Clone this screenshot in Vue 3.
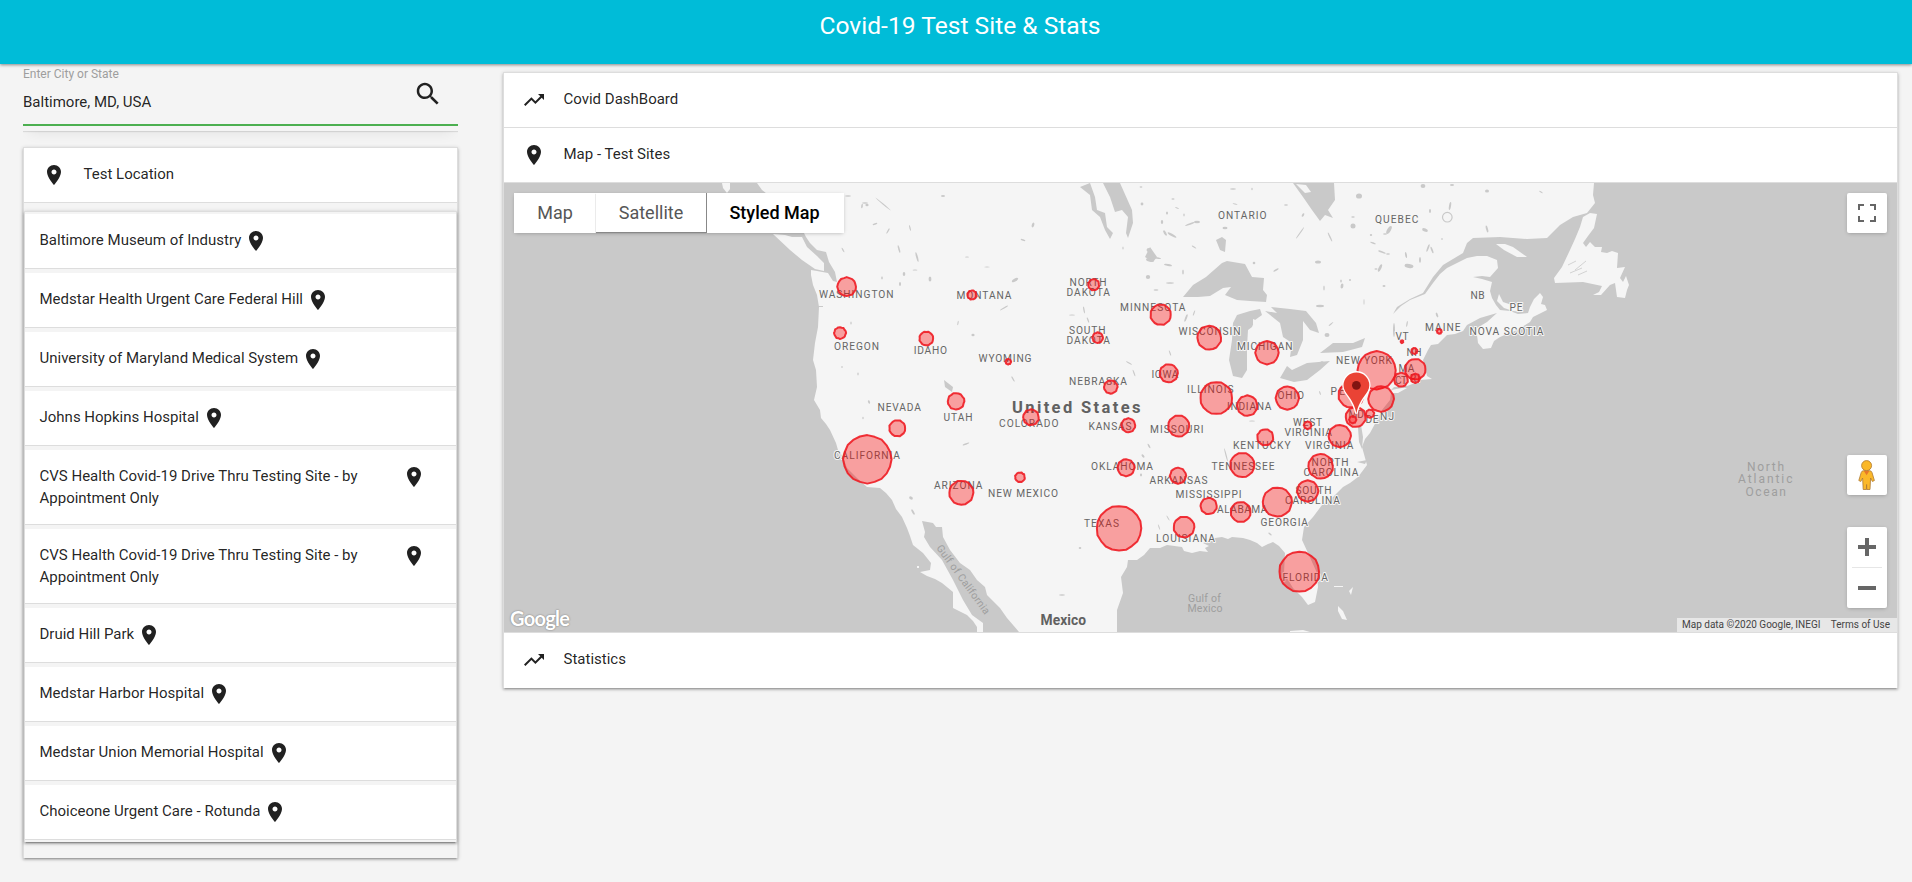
<script setup>
const sites = [
  'Baltimore Museum of Industry',
  'Medstar Health Urgent Care Federal Hill',
  'University of Maryland Medical System',
  'Johns Hopkins Hospital',
  'CVS Health Covid-19 Drive Thru Testing Site - by Appointment Only',
  'CVS Health Covid-19 Drive Thru Testing Site - by Appointment Only',
  'Druid Hill Park',
  'Medstar Harbor Hospital',
  'Medstar Union Memorial Hospital',
  'Choiceone Urgent Care - Rotunda',
]

const pin = 'M12 2C8.13 2 5 5.13 5 9c0 5.25 7 13 7 13s7-7.75 7-13c0-3.87-3.13-7-7-7zm0 9.5c-1.38 0-2.5-1.12-2.5-2.5s1.12-2.5 2.5-2.5 2.5 1.12 2.5 2.5-1.12 2.5-2.5 2.5z'
const trend = 'M16 6l2.29 2.29-4.88 4.88-4-4L2 16.59 3.41 18l6-6 4 4 6.3-6.29L22 12V6z'

// text, start x, end x, baseline
const labels = [
  ['WASHINGTON', 819, 893.5, 297.7], ['OREGON', 834, 879, 349.7], ['IDAHO', 913.7, 947, 353.7],
  ['MONTANA', 956.5, 1011.5, 298.5], ['WYOMING', 978.5, 1031.5, 361.5],
  ['NORTH', 1069.5, 1106.5, 285.7], ['DAKOTA', 1066.5, 1110, 295.7],
  ['SOUTH', 1069, 1105.5, 333.8], ['DAKOTA', 1066.5, 1110, 343.8],
  ['NEBRASKA', 1069, 1127, 384.8], ['NEVADA', 877.5, 921, 410.8], ['UTAH', 943.5, 972.5, 420.8],
  ['COLORADO', 999, 1058.5, 426.8], ['KANSAS', 1088.5, 1131.5, 429.7], ['OKLAHOMA', 1091, 1153, 470],
  ['CALIFORNIA', 834, 900, 458.8], ['ARIZONA', 934, 982.5, 489], ['NEW MEXICO', 988, 1058, 496.8],
  ['TEXAS', 1084, 1119, 527], ['MINNESOTA', 1120, 1185.5, 310.8], ['WISCONSIN', 1178.5, 1240.5, 335],
  ['MICHIGAN', 1237, 1292.5, 349.7], ['ONTARIO', 1218, 1266.5, 218.8], ['IOWA', 1151.5, 1178.5, 377.7],
  ['ILLINOIS', 1187, 1233.5, 393], ['INDIANA', 1227, 1271.5, 409.7], ['OHIO', 1277.5, 1304, 398.8],
  ['MISSOURI', 1150, 1203.5, 432.8], ['KENTUCKY', 1233, 1290.5, 448.8], ['WEST', 1293, 1322, 425.7],
  ['VIRGINIA', 1284.5, 1332, 435.8], ['VIRGINIA', 1305, 1353.5, 448.8], ['TENNESSEE', 1211.5, 1274.5, 470],
  ['NORTH', 1311.5, 1348.5, 465.8], ['CAROLINA', 1303.5, 1358.5, 475.8], ['SOUTH', 1295.5, 1331.5, 493.8],
  ['CAROLINA', 1285, 1340, 503.8], ['ARKANSAS', 1149.5, 1207.5, 483.8], ['MISSISSIPPI', 1175.5, 1241.5, 497.7],
  ['ALABAMA', 1217, 1267.5, 512.8], ['GEORGIA', 1260.5, 1308, 525.8], ['LOUISIANA', 1156, 1215, 541.8],
  ['FLORIDA', 1282.5, 1328, 580.8], ['NEW YORK', 1336, 1392, 363.8], ['VT', 1395.5, 1408.5, 340],
  ['NH', 1406.5, 1421.5, 356], ['MA', 1398.5, 1414.5, 372], ['CT', 1395, 1407, 383.5], ['RI', 1410, 1420, 382],
  ['PE', 1330.5, 1345, 395], ['MD', 1348.5, 1364, 418], ['DE', 1365.5, 1378.5, 423], ['NJ', 1380, 1394, 419.5],
  ['MAINE', 1425, 1460.5, 331], ['NB', 1470.5, 1484.5, 298.8], ['PE', 1509.5, 1522.5, 311],
  ['NOVA SCOTIA', 1469.5, 1543.5, 334.7], ['QUEBEC', 1375, 1418.5, 222.8],
]
const seaLabels = [
  ['Gulf of', 1188, 1221, 601.5, 10.5], ['Mexico', 1187.5, 1222.5, 612, 10.5],
  ['North', 1747, 1784, 470.5, 12], ['Atlantic', 1738, 1792.5, 483.4, 12], ['Ocean', 1745.5, 1786, 496.2, 12],
]
const cases = [
  [846.7, 286.7, 9.3], [840, 333, 5.8], [926.3, 338.5, 6.9], [972, 295, 4.5], [1008.3, 361.7, 2.7],
  [956, 401.3, 8.2], [897.3, 428.3, 8], [1031, 417.3, 7.8], [867.3, 459.3, 24], [961.3, 492.7, 12],
  [1020, 477.3, 4.8], [1128.3, 425.3, 6.9], [1126, 467.7, 8.4], [1119, 528.3, 22.3], [1093.7, 284.7, 5.5],
  [1097.7, 337.7, 5.2], [1110.7, 387, 6.6], [1160.7, 314.7, 10.2], [1209.3, 337.7, 11.9], [1267, 352.7, 11.5],
  [1168.7, 373.3, 9], [1216.3, 398, 16], [1247.3, 405.7, 10.1], [1287.3, 398, 11.5], [1178.7, 426, 10.5],
  [1265.3, 437.3, 8], [1307.7, 425.3, 3.7], [1339.7, 436, 11], [1242.3, 465, 12.1], [1320.7, 466.3, 12.3],
  [1307.7, 491, 10.5], [1277.3, 502, 14.5], [1240.7, 512, 10], [1208.7, 506, 8.1], [1178, 475.7, 7.9],
  [1184, 527, 10.3], [1299.3, 571.7, 20], [1376.7, 370.3, 19], [1381, 399, 12.7], [1351, 395, 12.5],
  [1355.7, 417, 10], [1352.7, 419.7, 3.5], [1370, 413.7, 4], [1415.3, 369.3, 10.3], [1401, 379.7, 6.9],
  [1415.3, 378.3, 4.5], [1414.3, 351, 2.9], [1402, 341.7, 1.2], [1439.3, 331.3, 2.3],
]
// The overlay rings are many-sided shapes with slightly uneven radii.
const ring = ([cx, cy, r], i) => {
  const n = 20
  return Array.from({ length: n }, (_, k) => {
    const a = (k / n) * Math.PI * 2
    const rr = r + 0.3 * Math.sin(k * 2.6 + i * 1.7)
    return `${(cx + rr * Math.cos(a)).toFixed(1)},${(cy + rr * Math.sin(a)).toFixed(1)}`
  }).join(' ')
}

// x, y, rx, ry, rotation
const ponds = [
  [848, 196, 3, .8, 0], [865, 203, 3, .8, 0], [867, 205, 1.6, 1.2, 0], [883, 204, 10, .5, 40], [875, 224, 2.5, .8, -20],
  [862, 206, .8, 2.4, 10], [888, 231, .7, 3, 30], [899, 249, .8, 4, -15], [917, 257, .9, 5, -15], [910, 228, .6, 3, -15],
  [943, 196, 2, 1, 0], [904, 274, 1.3, 2, 0], [900, 284, 1, 2, 0], [930, 279, 1.4, 2.6, 0], [915, 270, 2.5, .5, 0],
  [882, 278, .8, 1.4, 0], [843, 250, .7, 2.5, -30], [1015, 280, 3.5, 1.5, -30], [1004, 308, 4.5, .7, -30],
  [967, 257, 2, .6, 0], [1023, 240, 2.5, .8, 20], [1033, 225, 1.2, 2.5, 20], [987, 267, 3, .4, 0], [958, 323, .6, 2.4, 10],
  [973, 335, 1.6, 1.2, 0], [1013, 379, .7, 3, -30], [869, 402, 1, 1.8, -20], [863, 418, .7, 1.2, 0], [858, 374, .7, 1.4, 0],
  [851, 323, .7, 1.5, 0], [842, 367, 1, .8, 0], [966, 444, 3.5, .7, -20], [911, 498, 2, 1.4, 30], [913, 512, 1, 3, -30],
  [1062, 595, 3, .7, 0], [1080, 548, 1.3, 1, 0], [1149, 446, .8, 2.5, -30], [1141, 475, 1, 1.4, 0],
  [1084, 310, .7, 3.5, -10], [1088, 320, .7, 3, -20], [1129, 363, 3.5, .6, 30], [1134, 373, .6, 3.5, -20], [1072, 315, 3, .6, 0],
  [1148, 277, 2.2, 2, 0], [1142, 204, 1.4, 1.4, 0], [1150, 260, 4, 1.8, 10], [1157, 258, 4, .8, 10], [1149, 250, 2.5, 2, 0],
  [1165, 233, 3, 1.2, 60], [1172, 235, 5, 1.2, 30], [1190, 224, 5, .9, -20], [1197, 222, 3, 1.2, 0], [1162, 222, 1.2, 2, 0],
  [1168, 265, 4, 1, 10], [1194, 247, 2.6, .7, 30], [1156, 290, 2.5, .8, 0], [1170, 283, 4, .8, 0], [1183, 272, .8, 2.5, 0],
  [1225, 228, 2.5, 1.2, 0], [1233, 189, 3, .7, 0], [1254, 263, 1.3, 1.3, 0], [1276, 270, 3, .8, -30], [1318, 262, 3, 1.6, 0],
  [1324, 288, .7, 2.5, 0], [1342, 286, 1.4, 2.6, 10], [1320, 306, 4, 1.2, 0], [1327, 335, 2.5, 2, 0], [1331, 324, 3, .6, -40],
  [1300, 233, .6, 7, 35], [1330, 237, .7, 5, -25], [1353, 226, 2.5, 2.5, 0], [1359, 196, 3, 2.6, 0], [1423, 186, 2.4, 2, 0],
  [1353, 217, 1.8, .8, 0], [1389, 230, 1.8, 4.5, 30], [1385, 234, 2, .8, 0], [1425, 230, 3, 1.6, 20], [1450, 206, 1, 4, 10],
  [1487, 191, 2, 1.6, 0], [1452, 185, 2, .9, 0], [1487, 229, 1, 3.5, -15], [1541, 192, 2, .6, 30], [1409, 266, 4.5, 2, 10],
  [1380, 268, 1.4, 4, 25], [1376, 269, 1.6, .8, 0], [1406, 255, .9, 3, -10], [1420, 260, 1, 3, 0], [1428, 248, .9, 4, 20],
  [1432, 250, .9, 3.5, -20], [1382, 252, 4, .8, 20], [1373, 243, 3, .7, 20], [1388, 254, 2, .7, 0],
  [1384, 286, 1.5, .9, 0], [1364, 302, .5, 3, 0],
  [1437, 315, 1, 2.5, -20], [1407, 324, .7, 3, 10], [1350, 280, 1, 1, 0], [1341, 281, .8, 1.6, 0], [1394, 330, 1, 7, 0],
  [1371, 235, 1.2, 1, 0], [1430, 211, 1, 2, 0], [1442, 239, 1, .7, 0], [1322, 362, 1.5, .7, 0],
  [1252, 421, 3, .6, 0], [1226, 455, .6, 7, -15], [1270, 534, 2, .8, 40], [1168, 518, .5, 3, -30], [1159, 527, .5, 3, -20],
  [1320, 393, .6, 2, -20], [1143, 456, 1, 2, -40], [1170, 353, .6, 3, -20], [1186, 318, 1, 4, 20], [1194, 313, .6, 3, 20],
  [1123, 248, .6, 1.6, 0], [1141, 187, 1.4, .7, 0], [1173, 199, 1.6, .7, 0], [1235, 204, 2.5, .6, 10], [1252, 189, .7, 1.2, 0],
  [1286, 205, 2, .7, 0], [1303, 215, 1, 2, 30], [1167, 213, 1, 1.6, 0], [1177, 208, 2, .6, 20], [1184, 215, .7, 1.4, 0],
]
const pondTransform = ([x, y, , , a]) => `translate(${x} ${y}) rotate(${a})`
</script>

<template>
  <div class="page">
    <header class="bar"><h1>Covid-19 Test Site &amp; Stats</h1></header>

    <main class="columns">
      <aside class="side">
        <div class="search">
          <div class="field">
            <span class="caption">Enter City or State</span>
            <span class="value">Baltimore, MD, USA</span>
          </div>
          <svg class="lens" viewBox="0 0 24 24"><path d="M15.5 14h-.79l-.28-.27C15.41 12.59 16 11.11 16 9.5 16 5.91 13.09 3 9.5 3S3 5.91 3 9.5 5.91 16 9.5 16c1.61 0 3.09-.59 4.23-1.57l.27.28v.79l5 4.99L20.49 19l-4.99-5zm-6 0C7.01 14 5 11.99 5 9.5S7.01 5 9.5 5 14 7.01 14 9.5 11.99 14 9.5 14z" /></svg>
        </div>

        <section class="panel locations">
          <div class="row">
            <svg class="icon" viewBox="0 0 24 24"><path :d="pin" /></svg>
            <span>Test Location</span>
          </div>
          <ul class="list">
            <li v-for="(s, i) in sites" :key="i">
              <span class="site">{{ s }}</span>
              <svg class="icon" viewBox="0 0 24 24"><path :d="pin" /></svg>
            </li>
          </ul>
        </section>
      </aside>

      <section class="panel content">
        <div class="row">
          <svg class="icon" viewBox="0 0 24 24"><path :d="trend" /></svg>
          <span>Covid DashBoard</span>
        </div>
        <div class="row">
          <svg class="icon" viewBox="0 0 24 24"><path :d="pin" /></svg>
          <span>Map - Test Sites</span>
        </div>

        <div class="map">
          <svg class="canvas" viewBox="504 183 1393 449" preserveAspectRatio="none">
            <rect x="504" y="183" width="1393" height="449" class="land" />
            <g class="water">
              <path d="M504 183H757L762 190 775 200 800 225 806 237 810 243 817 250 826 252 829 262 835 272 837 282 833 281 828 273 817 271 811 270 811 275 813 285 817 295 819 307 818 327 815 343 813 360 816 370 817 387 814 400 820 410 821 418 826 424 830 430 836 443 838 450 843 457 847 468 857 478 867 487 880 488 886 493 892 500 896 509 902 517 907 528 910 536 913 545 923 553 931 563 930 570 920 572 927 576 935 579 942 583 953 592 953 608 967 615 973 621 977 627V632H504Z" />
              <path d="M922 521L933 523 936 527 942 527 943 537 950 550 960 563 970 570 977 580 985 587 987 595 1000 608 1007 618 1019 632H983V623L972 615 963 600 953 580 942 560 930 547 924 537 925 532Z" />
              <path d="M1117 632V610L1123 593 1121 577 1127 567 1128 560 1137 560 1144 555 1150 548 1160 548 1167 545 1182 547 1184 551 1192 553 1200 551 1208 552 1205 548 1209 546 1203 543 1209 541 1215 538 1222 537 1228 539 1232 537 1243 538 1250 540 1257 543 1262 547 1268 544 1273 542 1279 546 1285 553 1284 573 1293 588 1302 597 1308 605 1315 602 1318 587 1317 573 1308 553 1302 540 1304 527 1313 517 1322 505 1333 497 1343 487 1350 483 1358 477 1367 465 1362 447 1365 439 1370 433 1377 420 1382 410 1390 400 1391 393 1398 393 1407 388 1402 388 1391 390 1394 387 1407 386 1415 383 1420 380 1432 379 1427 376 1425 367 1423 360 1428 350 1431 345 1438 344 1447 335 1455 334 1463 331 1467 325 1480 318 1497 313 1487 322 1477 328 1477 335 1478 343 1483 349 1491 348 1494 341 1500 337 1517 330 1530 322 1533 317 1547 310 1545 305 1541 304 1543 297 1540 293 1534 299 1530 307 1528 313 1518 314 1510 311 1500 310 1496 305 1492 298 1490 291 1492 282 1482 279 1473 277 1482 276 1490 277 1498 268 1497 260 1487 256 1477 256 1467 258 1455 264 1447 268 1440 274 1433 283 1425 294 1410 300 1401 306 1393 314 1397 307 1410 299 1423 293 1433 277 1443 265 1463 253 1467 243 1473 238 1500 237 1527 239 1547 238 1560 225 1573 217 1587 213 1595 203 1593 195 1594 183H1897V632Z" />
              <path d="M1183 297L1193 285 1206 277 1214 270 1222 263 1227 261 1245 264 1252 277 1264 278 1263 290 1267 295 1266 302 1250 301 1237 300 1225 295 1231 287 1223 288 1210 296 1198 297Z" />
              <path d="M1237 315L1250 311 1260 309 1262 315 1255 320 1252 327 1248 330 1247 347 1247 370 1242 378 1233 376 1229 360 1232 340 1233 323Z" />
              <path d="M1265 311L1277 313 1271 307 1290 309 1306 311 1316 323 1319 333 1310 330 1303 321 1303 340 1297 355 1290 357 1292 343 1283 337 1280 323Z" />
              <path d="M1280 378L1287 366 1292 370 1307 363 1330 361 1320 370 1307 380 1294 382Z" />
              <path d="M1320 353L1333 343 1353 343 1365 338 1362 347 1343 352Z" />
              <path d="M1293 183H1334L1335 200 1328 210 1333 218 1325 215 1320 221 1312 210 1303 197Z" />
              <path d="M1103 183H1120L1132 210 1133 223 1128 238 1126 233 1128 217 1122 210 1115 212 1110 197Z" />
              <path d="M1080 187L1090 183 1095 197 1097 210 1105 213 1107 227 1113 233 1110 239 1105 230 1100 217 1092 210 1090 195Z" />
              <path d="M1216 240L1222 237 1226 240 1225 252 1220 250Z" />
              <path d="M1145 257L1150 247 1157 257 1153 262Z" />
              <path d="M944 380L953 387 952 392 945 387Z" />
              <path d="M1363 437L1362 449 1359 442 1358 427 1361 425Z" />
              <path d="M1357 462L1367 460 1365 464Z" />
              <path d="M816 306H823V307H816Z" />
            </g>
            <g class="water">
              <ellipse v-for="(p, i) in ponds" :key="i" :rx="p[2]" :ry="p[3]" :transform="pondTransform(p)" />
            </g>
            <circle cx="1447.3" cy="217.2" r="4.8" class="crater" />
            <g class="land">
              <path d="M722 183H730V189L727 193 723 188Z" />
              <path d="M773 234L785 235 792 237 802 237 807 247 817 256 824 263 824 271 815 269 802 260 790 250Z" />
              <path d="M1597 214L1590 213 1583 217 1580 227 1575 239 1570 250 1562 267 1554 278 1555 283 1583 282 1602 286 1599 292 1593 295 1601 295 1610 285 1615 283 1616 290 1617 297 1625 298 1627 290 1629 285 1626 276 1623 282 1620 278 1625 267 1617 268 1618 253 1612 251 1607 253 1601 252 1602 247 1595 247 1590 242 1586 247 1583 243 1588 236 1594 228Z" />
              <path d="M1496 244L1505 244 1513 247 1527 257 1517 257 1504 250Z" />
              <path d="M1499 294L1503 302 1512 305 1522 305 1523 312 1513 311 1504 308 1497 301Z" />
              <path d="M1296 184L1306 185 1311 192 1305 193Z" />
              <path d="M1338 606L1343 611 1347 620 1342 619 1338 611ZM1349 591L1353 587 1351 595ZM1334 586H1343V587H1334ZM1290 631L1303 630 1310 632H1290Z" />
              <path d="M917 566H919V568H917ZM1253 319L1258 321 1253 325Z" />
            </g>
            <g class="ridge">
              <path d="M1568 265L1576 261M1570 273L1582 268M1575 270L1586 261M1578 275L1587 271" />
            </g>

            <text v-for="(l, i) in labels" :key="i" class="state" :x="l[1]" :y="l[3]" :textLength="l[2] - l[1]">{{ l[0] }}</text>
            <text v-for="(l, i) in seaLabels" :key="'s' + i" class="sea" :x="l[1]" :y="l[3]" :textLength="l[2] - l[1]" :font-size="l[4]">{{ l[0] }}</text>
            <text class="sea" font-size="10.5" textLength="83" transform="translate(936 548) rotate(54)">Gulf of California</text>
            <text class="country" x="1012" y="412.8" textLength="128.5" font-size="16.5">United States</text>
            <text class="country" x="1040.5" y="625.2" textLength="45.5" font-size="13.8">Mexico</text>

            <polygon v-for="(c, i) in cases" :key="'c' + i" class="case" :points="ring(c, i)" />

            <g transform="translate(1356.4 413.5)">
              <path class="pin-halo" d="M0 0C-1.6-8-4.4-12.4-7.8-17.2-10.6-21-12.9-23.8-12.9-28.2A12.9 12.9 0 0 1 12.9-28.2C12.9-23.8 10.6-21 7.8-17.2 4.4-12.4 1.6-8 0 0Z" />
              <circle class="pin-dot" cx="0" cy="-28.2" r="4.4" />
            </g>
          </svg>

          <div class="types">
            <span class="type">Map</span><span class="type mid">Satellite</span><span class="type on">Styled Map</span>
          </div>
          <svg class="ctl full" viewBox="0 0 40 40"><path d="M11 11h6v2h-4v4h-2zM23 11h6v6h-2v-4h-4zM11 23h2v4h4v2h-6zM27 23h2v6h-6v-2h4z" /></svg>
          <svg class="ctl man" viewBox="0 0 40 40">
            <path d="M14.2 17.5q.6-1.8 2.4-1.8h6q1.8 0 2.4 1.8l2.4 8-2 1-1.8-3.5-.6 11.5h-3.2l-.2-5-.2 5h-3.2l-.6-11.5-1.8 3.5-2-1z" class="body" />
            <path d="M16.7 15.7h5.8l-2.9 4.6z" class="collar" />
            <circle cx="19.6" cy="10.6" r="5" class="body" />
          </svg>
          <svg class="ctl zoom" viewBox="0 0 40 81"><path d="M11 18h7v-7h4v7h7v4h-7v7h-4v-7h-7zM11 59h18v4H11z" /><path d="M5 40h30v1H5z" class="rule" /></svg>
          <span class="google">Google</span>
          <div class="legal"><span>Map data ©2020 Google, INEGI</span><span>Terms of Use</span></div>
        </div>

        <div class="row">
          <svg class="icon" viewBox="0 0 24 24"><path :d="trend" /></svg>
          <span>Statistics</span>
        </div>
      </section>
    </main>
  </div>
</template>

<style>
body { background: #f4f4f4; overflow: hidden; }
</style>

<style scoped>
* { box-sizing: border-box; }
.page { height: 882px; background: #f4f4f4; font-family: Roboto, sans-serif; font-size: 15px; line-height: 22px; color: rgba(0, 0, 0, .87); overflow: hidden; }
.bar { position: relative; z-index: 2; height: 64px; padding-left: 8px; background: #00bcd8; display: flex; justify-content: center; box-shadow: 0 1px 3px rgba(0, 0, 0, .45); }
h1 { margin: 10px 0 0; color: #fff; font-size: 24.6px; line-height: 32px; font-weight: 400; }
.columns { display: flex; align-items: flex-start; padding-left: 23px; }
.side { width: 435px; margin-right: 45px; }
.search { height: 67px; display: flex; justify-content: space-between; box-shadow: 0 1px 1px rgba(0, 0, 0, .1), 0 8px 12px -6px rgba(0, 0, 0, .07); position: relative; clip-path: inset(0 0 -20px 0); }
.field { display: flex; flex-direction: column; width: 100%; height: 62px; border-bottom: 2px solid #4caf50; }
.caption { font-size: 12px; line-height: 16px; color: #9e9e9e; margin-top: 2px; }
.value { line-height: 20px; margin-top: 10px; }
.lens { position: absolute; left: 390px; top: 15px; width: 30px; height: 30px; fill: #212121; }
.panel { border: 1px solid #ddd; border-bottom: 0; box-shadow: 0 2px 2px rgba(0, 0, 0, .14), 0 3px 1px -2px rgba(0, 0, 0, .12), 0 1px 4px rgba(0, 0, 0, .2); }
.locations { margin-top: 16px; padding-bottom: 16px; }
.row { height: 55px; padding: 15px 17px 15px 17.5px; display: flex; align-items: flex-start; background: #fff; border-bottom: 1px solid #ddd; }
.row span { margin-left: 18px; }
.icon { width: 24px; height: 24px; flex: none; fill: #212121; }
.list { list-style: none; margin: 8px 0 0; padding: 2px 0; border: 1px solid #ddd; border-bottom: 0; box-shadow: 0 2px 2px rgba(0, 0, 0, .16), 0 3px 1px -2px rgba(0, 0, 0, .2), 0 1px 4px rgba(0, 0, 0, .25); }
.list li { display: flex; align-items: flex-start; min-height: 55px; padding: 15px 15px 15px 14.5px; background: #fff; border-bottom: 1px solid #ddd; }
.list li + li { margin-top: 4px; }
.site { max-width: 359px; margin-right: 3px; }
.content { width: 1395px; margin-top: 8px; }
.content .row:last-child { border-bottom: 0; height: 55px; }
.map { position: relative; height: 450px; background: #c9c9c9; border-bottom: 1px solid #ddd; overflow: hidden; }
.canvas { display: block; width: 1393px; height: 449px; }
.land { fill: #f5f5f5; }
.water { fill: #c9c9c9; }
.ridge { stroke: #c9c9c9; stroke-width: .8; }
.crater { fill: none; stroke: #c9c9c9; stroke-width: 1.2; }
.state { font-size: 10.2px; fill: #666; stroke: #f5f5f5; stroke-width: 2px; paint-order: stroke; stroke-linejoin: round; }
.sea { fill: #9e9e9e; }
.country { fill: #616161; font-weight: 700; }
.case { fill: #f00; fill-opacity: .35; stroke: #ee1c24; stroke-opacity: .9; stroke-width: 2; stroke-linejoin: round; }
.pin-halo { fill: #ea4335; stroke: #fff; stroke-width: 2.6; paint-order: stroke; }
.pin-dot { fill: #811411; }
.types { position: absolute; left: 10px; top: 10px; display: flex; height: 40px; font-size: 18px; line-height: 39px; color: #565656; text-align: center; box-shadow: 0 1px 4px -1px rgba(0, 0, 0, .3); }
.type { background: #fff; width: 82px; }
.type.mid { width: 110px; height: 39px; box-shadow: 0 1px 1px #888; }
.type.on { width: 138px; color: #000; font-weight: 500; border-left: 1px solid #888; position: relative; padding-right: 2px; }
.ctl { position: absolute; right: 10px; width: 40px; height: 40px; background: #fff; border-radius: 2px; box-shadow: 0 1px 4px -1px rgba(0, 0, 0, .3); fill: #666; }
.full { top: 10px; }
.man { top: 272px; }
.zoom { top: 344px; height: 81px; }
.rule { fill: #e6e6e6; }
.body { fill: #fbb829; stroke: #ad7a35; stroke-width: .8; }
.collar { fill: #e77828; }
.google { position: absolute; left: 6px; top: 423px; font: 700 20px/24px Lato, sans-serif; letter-spacing: -.7px; color: #fff; text-shadow: 0 0 2px #888, 0 0 1px #888; }
.legal { position: absolute; right: 0; bottom: 0; width: 220px; height: 14px; padding: 0 7px 0 5px; display: flex; justify-content: space-between; font-size: 10px; line-height: 14px; color: #444; background: #e7e7e7; }
</style>
